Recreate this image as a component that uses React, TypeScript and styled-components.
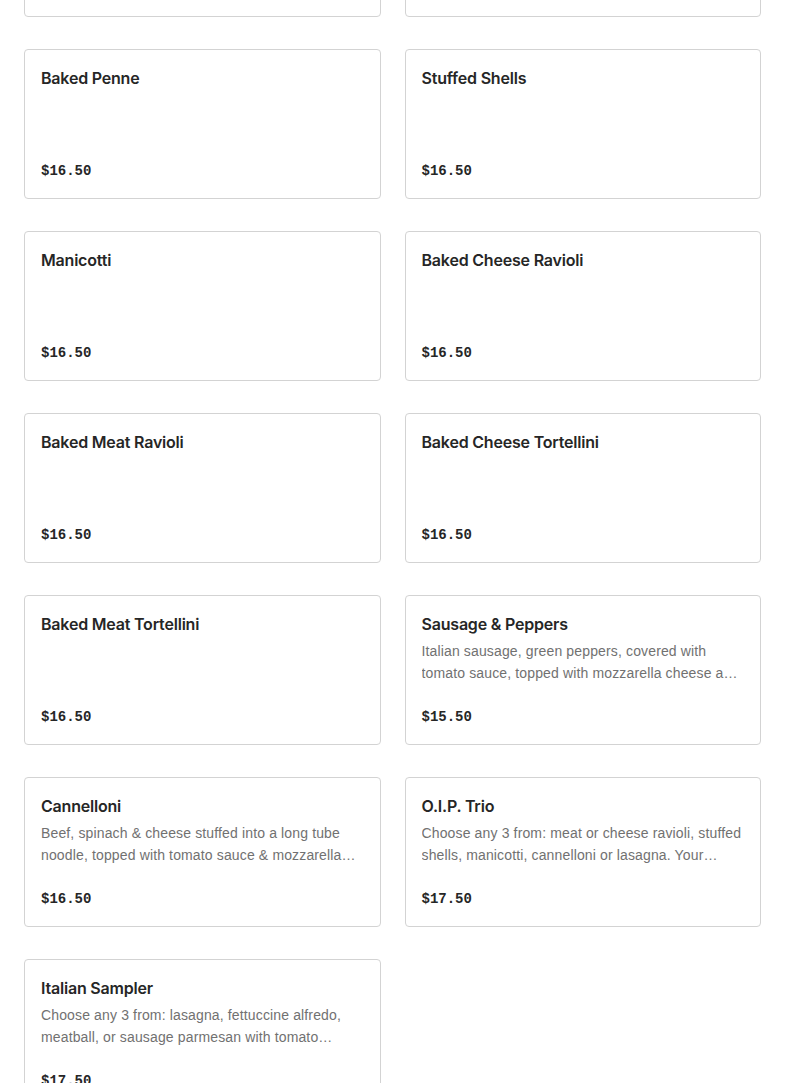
import styled, { createGlobalStyle } from 'styled-components';

const GlobalStyle = createGlobalStyle`
  html, body {
    margin: 0;
    padding: 0;
    background: #fff;
    overflow: hidden;
  }
  body {
    font-family: Inter, "Noto Sans", "Liberation Sans", sans-serif;
    -webkit-font-smoothing: antialiased;
  }
`;

// page is shown scrolled part way down the menu
const MenuSection = styled.section`
  padding: 0 24px;
  margin-top: -133px;
`;

const MenuGrid = styled.div`
  display: grid;
  grid-template-columns: 1fr 1fr;
  column-gap: 24px;
  row-gap: 32px;
`;

const ItemCard = styled.div`
  box-sizing: border-box;
  height: 150px;
  border: 1px solid #d3d3d3;
  border-radius: 4px;
  padding: 16px;
  display: flex;
  flex-direction: column;
  background: #fff;
`;

const ItemName = styled.h3`
  margin: 0;
  font-size: 16px;
  line-height: 24px;
  font-weight: 600;
  color: #262626;
  letter-spacing: -0.2px;
`;

const ItemDesc = styled.p`
  margin: 4px 0 0;
  font-family: "Liberation Sans", Arial, sans-serif;
  font-size: 14px;
  line-height: 22px;
  letter-spacing: 0.14px;
  color: #717171;
  display: -webkit-box;
  -webkit-line-clamp: 2;
  -webkit-box-orient: vertical;
  overflow: hidden;
`;

const ItemPrice = styled.div`
  margin-top: auto;
  font-family: "Liberation Mono", "DejaVu Sans Mono", monospace;
  font-size: 14px;
  line-height: 22px;
  font-weight: 700;
  color: #262626;
`;

interface MenuItem {
  name: string;
  desc?: string;
  price: string;
}

const menuItems: MenuItem[] = [
  { name: 'Lasagna', price: '$16.50' },
  { name: 'Fettuccine Alfredo', price: '$16.50' },
  { name: 'Baked Penne', price: '$16.50' },
  { name: 'Stuffed Shells', price: '$16.50' },
  { name: 'Manicotti', price: '$16.50' },
  { name: 'Baked Cheese Ravioli', price: '$16.50' },
  { name: 'Baked Meat Ravioli', price: '$16.50' },
  { name: 'Baked Cheese Tortellini', price: '$16.50' },
  { name: 'Baked Meat Tortellini', price: '$16.50' },
  {
    name: 'Sausage & Peppers',
    desc: 'Italian sausage, green peppers, covered with tomato sauce, topped with mozzarella cheese and baked.',
    price: '$15.50',
  },
  {
    name: 'Cannelloni',
    desc: 'Beef, spinach & cheese stuffed into a long tube noodle, topped with tomato sauce & mozzarella cheese.',
    price: '$16.50',
  },
  {
    name: 'O.I.P. Trio',
    desc: 'Choose any 3 from: meat or cheese ravioli, stuffed shells, manicotti, cannelloni or lasagna. Your choice of sauce.',
    price: '$17.50',
  },
  {
    name: 'Italian Sampler',
    desc: 'Choose any 3 from: lasagna, fettuccine alfredo, meatball, or sausage parmesan with tomato marinara sauce.',
    price: '$17.50',
  },
];

const App = () => {
  return (
    <>
      <GlobalStyle />
      <MenuSection>
        <MenuGrid>
          {menuItems.map((item) => (
            <ItemCard key={item.name}>
              <ItemName>{item.name}</ItemName>
              {item.desc && <ItemDesc>{item.desc}</ItemDesc>}
              <ItemPrice>{item.price}</ItemPrice>
            </ItemCard>
          ))}
        </MenuGrid>
      </MenuSection>
    </>
  );
};

export default App;
